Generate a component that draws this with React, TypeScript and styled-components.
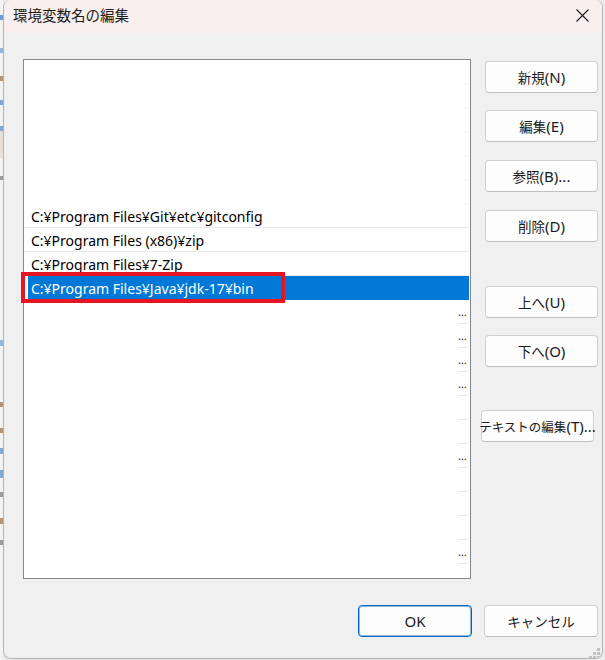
import React from "react";
import styled, { createGlobalStyle } from "styled-components";

const GlobalStyle = createGlobalStyle`
  html, body { margin: 0; padding: 0; }
  body {
    width: 605px; height: 660px; overflow: hidden;
    background: #e9e9e9;
    font-family: "Noto Sans", "Noto Sans CJK JP", sans-serif;
  }
  #root { width: 605px; height: 660px; }
`;

const Page = styled.div`
  display: flex;
  width: 605px;
  height: 660px;
`;

const BackStrip = styled.div<{ $w: number; $side: "left" | "right" }>`
  flex: none;
  width: ${(p) => p.$w}px;
  height: 100%;
  background: ${(p) =>
    p.$side === "left"
      ? `linear-gradient(to bottom,
        #f3f3f3 0 15px, #6e9fd8 15px 20px, #f3f3f3 20px 48px, #8fb6e2 48px 53px,
        #f3f3f3 53px 76px, #b99473 76px 81px, #f3f3f3 81px 100px, #7fa7d8 100px 105px,
        #f3f3f3 105px 126px, #7fa7d8 126px 131px, #e7dfd8 131px 158px, #f3f3f3 158px 176px,
        #9a9a9a 176px 180px, #f3f3f3 180px 340px,
        #8fb6e2 340px 346px, #f3f3f3 346px 402px, #b99473 402px 407px, #f3f3f3 407px 428px,
        #b99473 428px 433px, #f3f3f3 433px 448px, #7fa7d8 448px 454px, #f3f3f3 454px 470px,
        #7fa7d8 470px 478px, #f3f3f3 478px 492px, #9a9a9a 492px 497px, #f3f3f3 497px 518px,
        #b99473 518px 524px, #f3f3f3 524px 540px, #9a9a9a 540px 545px, #f3f3f3 545px 660px)`
      : "#ececec"};
`;

const Window = styled.div`
  position: relative;
  flex: none;
  width: 600px;
  height: 659px;
  box-sizing: border-box;
  border: 1px solid #b3b3b3;
  border-top: none;
  border-radius: 8px;
  background: #f0f0f0;
  display: flex;
  flex-direction: column;
  overflow: hidden;
`;

const TitleBar = styled.div`
  flex: none;
  height: 33px;
  background: #f8efee;
  display: flex;
  align-items: center;
  padding-left: 9px;
`;

const Title = styled.div`
  flex: 1;
  font-family: "Noto Sans CJK JP", sans-serif;
  font-size: 14.5px;
  color: #1b1b1b;
  line-height: 1;
  margin-top: -2px;
`;

const CloseBox = styled.div`
  width: 40px;
  height: 33px;
  display: flex;
  align-items: center;
  justify-content: center;
  margin-top: -2px;
`;

const Body = styled.div`
  flex: 1;
  display: flex;
  flex-direction: column;
  padding: 26px 4px 21px 19px;
`;

const Main = styled.div`
  display: flex;
  gap: 14px;
`;

const ListBox = styled.div`
  flex: none;
  width: 448px;
  height: 520px;
  box-sizing: border-box;
  border: 1px solid #84878d;
  background: #ffffff;
  display: flex;
  flex-direction: column;
  overflow: hidden;
`;

const TextRow = styled.div<{ $selected?: boolean }>`
  flex: none;
  height: 24px;
  box-sizing: border-box;
  display: flex;
  align-items: center;
  font-size: 14px;
  white-space: nowrap;
  margin-right: 1px;
  margin-left: ${(p) => (p.$selected ? 4 : 0)}px;
  padding-left: ${(p) => (p.$selected ? 3 : 7)}px;
  padding-top: 1px;
  background: ${(p) => (p.$selected ? "#0078d7" : "transparent")};
  color: ${(p) => (p.$selected ? "#ffffff" : "#000000")};
  border-bottom: 1px solid ${(p) => (p.$selected ? "#0078d7" : "#e9e9e9")};
`;

const EmptyRow = styled.div`
  flex: none;
  height: 24px;
  display: flex;
  justify-content: flex-end;
  padding-right: 2px;
`;

const RowEnd = styled.div<{ $wide: boolean }>`
  width: ${(p) => (p.$wide ? 10 : 2)}px;
  height: 24px;
  box-sizing: border-box;
  border-bottom: 1px solid #e6e6e6;
  font-size: 11px;
  line-height: 24px;
  color: #1a1a1a;
  overflow: visible;
  white-space: nowrap;
`;

const ButtonColumn = styled.div`
  flex: none;
  width: 113px;
  display: flex;
  flex-direction: column;
`;

const DialogButton = styled.button<{ $top?: number; $shift?: number; $primary?: boolean; $w?: number }>`
  flex: none;
  margin: ${(p) => p.$top ?? 0}px 0 0 ${(p) => p.$shift ?? 0}px;
  width: ${(p) => p.$w ?? 113}px;
  height: 32px;
  box-sizing: border-box;
  padding: 0;
  border-radius: 4px;
  border: 1px solid ${(p) => (p.$primary ? "#0067c0" : "#d0d0d0")};
  border-bottom-color: ${(p) => (p.$primary ? "#0067c0" : "#bfbfbf")};
  box-shadow: ${(p) => (p.$primary ? "inset 0 0 0 1px rgba(0,103,192,0.45)" : "none")};
  background: #fdfdfd;
  color: #1a1a1a;
  font-family: "Noto Sans", "Noto Sans CJK JP", sans-serif;
  font-size: 15px;
  white-space: nowrap;
  overflow: visible;
  display: flex;
  align-items: center;
  justify-content: center;
`;

const Jp = styled.span<{ $size?: number }>`
  font-family: "Noto Sans CJK JP", sans-serif;
  font-size: ${(p) => p.$size ?? 13.5}px;
`;

const Footer = styled.div`
  margin-top: 26px;
  display: flex;
  justify-content: flex-end;
  gap: 12px;
`;

const Annotation = styled.div`
  position: absolute;
  left: 17px;
  top: 272px;
  width: 264px;
  height: 31px;
  box-sizing: border-box;
  border: 4px solid #e8141f;
  pointer-events: none;
`;

const Grip = styled.svg`
  position: absolute;
  right: 2px;
  bottom: -1px;
`;

const paths = [
  "C:¥Program Files¥Git¥etc¥gitconfig",
  "C:¥Program Files (x86)¥zip",
  "C:¥Program Files¥7-Zip",
];

// lower rows: true = has ellipsis
const lowerRows = [true, true, true, true, false, false, true, false, false, false, true, false];

export default function App() {
  return (
    <>
      <GlobalStyle />
      <Page>
        <BackStrip $w={3} $side="left" />
        <Window>
          <TitleBar>
            <Title>環境変数名の編集</Title>
            <CloseBox>
              <svg width="13" height="13" viewBox="0 0 13 13">
                <path d="M0.5 0.5 L12.5 12.5 M12.5 0.5 L0.5 12.5" stroke="#1a1a1a" strokeWidth="1.1" fill="none" />
              </svg>
            </CloseBox>
          </TitleBar>
          <Body>
            <Main>
              <ListBox>
                {Array.from({ length: 6 }).map((_, i) => (
                  <EmptyRow key={`t${i}`}>
                    <RowEnd $wide={false} />
                  </EmptyRow>
                ))}
                {paths.map((p) => (
                  <TextRow key={p}>{p}</TextRow>
                ))}
                <TextRow $selected>C:¥Program Files¥Java¥jdk-17¥bin</TextRow>
                {lowerRows.map((dots, i) => (
                  <EmptyRow key={`b${i}`}>
                    <RowEnd $wide>{dots ? "…" : ""}</RowEnd>
                  </EmptyRow>
                ))}
              </ListBox>
              <ButtonColumn>
                <DialogButton $top={2}><Jp>新規</Jp>(N)</DialogButton>
                <DialogButton $top={17}><Jp>編集</Jp>(E)</DialogButton>
                <DialogButton $top={18}><Jp>参照</Jp>(B)...</DialogButton>
                <DialogButton $top={18}><Jp>削除</Jp>(D)</DialogButton>
                <DialogButton $top={44}><Jp>上へ</Jp>(U)</DialogButton>
                <DialogButton $top={17}><Jp>下へ</Jp>(O)</DialogButton>
                <DialogButton $top={43} $shift={-4}><Jp $size={12.5}>テキストの編集</Jp>(T)...</DialogButton>
              </ButtonColumn>
            </Main>
            <Footer>
              <DialogButton $primary $w={114}>OK</DialogButton>
              <DialogButton $w={114}><Jp>キャンセル</Jp></DialogButton>
            </Footer>
          </Body>
          <Annotation />
          <Grip width="11" height="11" viewBox="0 0 11 11">
            <rect x="8" y="0" width="3" height="3" fill="#c2c2c2" />
            <rect x="4" y="4" width="3" height="3" fill="#c2c2c2" />
            <rect x="8" y="4" width="3" height="3" fill="#c2c2c2" />
            <rect x="0" y="8" width="3" height="3" fill="#c2c2c2" />
            <rect x="4" y="8" width="3" height="3" fill="#c2c2c2" />
            <rect x="8" y="8" width="3" height="3" fill="#c2c2c2" />
          </Grip>
        </Window>
        <BackStrip $w={2} $side="right" />
      </Page>
    </>
  );
}
